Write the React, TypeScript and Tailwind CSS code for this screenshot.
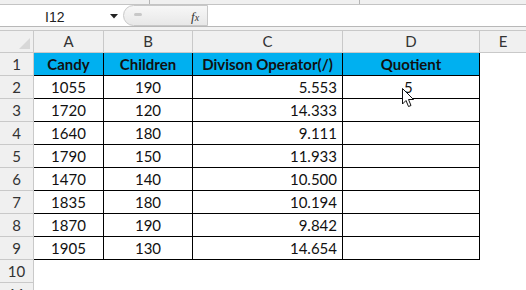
import React from "react";

const cols = [
  { w: "w-[70px]", label: "A" },
  { w: "w-[89px]", label: "B" },
  { w: "w-[150px]", label: "C" },
  { w: "w-[137px]", label: "D" },
];

const data: [string, string, string, string][] = [
  ["1055", "190", "5.553", "5"],
  ["1720", "120", "14.333", ""],
  ["1640", "180", "9.111", ""],
  ["1790", "150", "11.933", ""],
  ["1470", "140", "10.500", ""],
  ["1835", "180", "10.194", ""],
  ["1870", "190", "9.842", ""],
  ["1905", "130", "14.654", ""],
];

const font = { fontFamily: "Lato, 'Open Sans', sans-serif" };

function RowHead({ n }: { n: number }) {
  return (
    <div className="w-[34px] shrink-0 h-full flex items-center justify-center bg-[#f0f0f0] border-r border-b border-[#c9c9c9] text-[#333] text-[15px]">
      {n}
    </div>
  );
}

export default function App() {
  return (
    <div className="w-[526px] h-[290px] overflow-hidden bg-white relative" style={font}>
      {/* top strip */}
      <div className="h-[5px] bg-[#f0f0f0] border-b border-[#c4c4c4] flex">
        <div className="w-[150px] border-r border-[#b5b5b5]" />
        <div className="w-[210px] border-r border-[#b5b5b5]" />
      </div>
      {/* formula bar */}
      <div className="h-[22px] flex bg-white border-b border-[#b8b8b8]">
        <div className="w-[123px] flex items-center relative">
          <span className="absolute left-[45px] top-[2px] text-[14px] text-[#222]" style={{ fontFamily: "'Liberation Sans', sans-serif" }}>I12</span>
          <svg className="absolute left-[110px] top-[9px]" width="8" height="5" viewBox="0 0 8 5">
            <polygon points="0,0 8,0 4,4.5" fill="#222" />
          </svg>
        </div>
        <div className="w-[85px] h-full rounded-l-[11px] border border-[#c8c8c8] bg-gradient-to-b from-[#f7f7f7] to-[#e8e8e8] relative">
          <div className="absolute left-[10px] top-[7px] w-[8px] h-[3px] rounded-full bg-[#c8c8c8]" />
          <span className="absolute left-[67px] top-[1px] text-[13px] italic text-[#333]" style={{ fontFamily: "'Liberation Serif', serif" }}>
            f<span className="text-[10px]">x</span>
          </span>
        </div>
        <div className="flex-1 bg-white" />
      </div>
      {/* gap */}
      <div className="h-[4px] bg-[#f2f2f2] border-b border-[#c8c8c8]" />
      {/* column header */}
      <div className="h-[22px] flex">
        <div className="w-[34px] shrink-0 h-full bg-[#f0f0f0] border-r border-b border-[#c9c9c9] relative">
          <svg className="absolute right-[3px] bottom-[3px]" width="11" height="11" viewBox="0 0 11 11">
            <polygon points="11,0 11,11 0,11" fill="#d8d8d8" />
          </svg>
        </div>
        {cols.map((c) => (
          <div key={c.label} className={`${c.w} shrink-0 h-full flex items-center justify-center bg-[#f0f0f0] border-r border-b border-[#c9c9c9] text-[#333] text-[15px]`}>
            {c.label}
          </div>
        ))}
        <div className="flex-1 h-full flex items-center justify-center bg-[#f0f0f0] border-b border-[#c9c9c9] text-[#333] text-[15px]">E</div>
      </div>
      {/* header row 1 */}
      <div className="h-[23px] flex">
        <RowHead n={1} />
        {["Candy", "Children", "Divison Operator(/)", "Quotient"].map((t, i) => (
          <div key={t} className={`${cols[i].w} shrink-0 h-full flex items-center justify-center bg-[#00b0f0] border-r border-b border-black font-bold text-[15px] text-[#111]`}>
            {t}
          </div>
        ))}
        <div className="flex-1 h-full bg-white" />
      </div>
      {data.map((r, i) => (
        <div key={i} className="h-[23px] flex">
          <RowHead n={i + 2} />
          <div className="w-[70px] shrink-0 h-full flex items-center justify-center border-r border-b border-black text-[15px] text-[#111]">{r[0]}</div>
          <div className="w-[89px] shrink-0 h-full flex items-center justify-center border-r border-b border-black text-[15px] text-[#111]">{r[1]}</div>
          <div className="w-[150px] shrink-0 h-full flex items-center justify-end pr-[5px] border-r border-b border-black text-[15px] text-[#111]">{r[2]}</div>
          <div className="w-[137px] shrink-0 h-full flex items-center pl-[61px] border-r border-b border-black text-[15px] text-[#111]">{r[3]}</div>
          <div className="flex-1 h-full bg-white" />
        </div>
      ))}
      <div className="h-[23px] flex">
        <RowHead n={10} />
        <div className="flex-1 bg-white" />
      </div>
      <div className="h-[23px] flex">
        <RowHead n={11} />
        <div className="flex-1 bg-white" />
      </div>
      {/* mouse cursor */}
      <svg className="absolute left-[402px] top-[88px]" width="13" height="20" viewBox="0 0 13 20">
        <path d="M0.5 0.5 L0.5 16 L4 12.5 L6.5 18.5 L9 17.5 L6.5 11.5 L11.5 11.5 Z" fill="white" stroke="#111" strokeWidth="1" strokeLinejoin="round" />
      </svg>
    </div>
  );
}
